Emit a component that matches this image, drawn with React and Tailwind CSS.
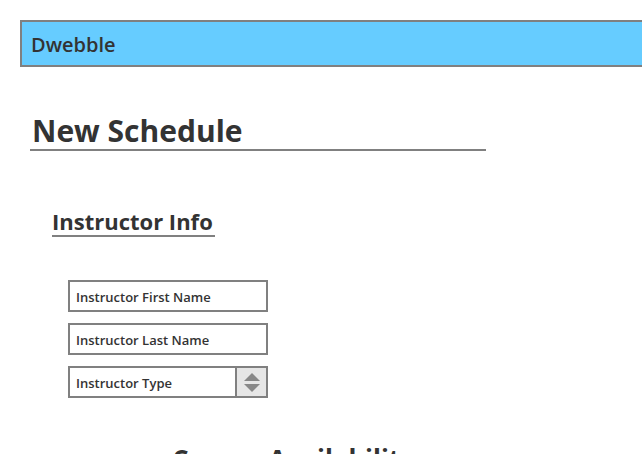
import React from "react";

function Field({ label, select }) {
  return (
    <div className="flex h-8 w-[200px] border-2 border-[#808080] bg-white">
      <div className="flex flex-1 items-end pb-[3px] pl-[6px] text-[13px] font-semibold text-[#333]">
        {label}
      </div>
      {select && (
        <div className="flex w-[31px] flex-col items-center justify-center gap-[3px] border-l-2 border-[#808080] bg-[#e6e6e6]">
          <svg width="16" height="8" viewBox="0 0 16 8">
            <polygon points="8,0 16,8 0,8" fill="#888" />
          </svg>
          <svg width="16" height="8" viewBox="0 0 16 8">
            <polygon points="0,0 16,0 8,8" fill="#888" />
          </svg>
        </div>
      )}
    </div>
  );
}

export default function App() {
  return (
    <div className="h-[454px] w-[642px] overflow-hidden bg-white font-['Open_Sans',sans-serif] text-[#333]">
      {/* header bar */}
      <div className="pl-5 pt-5">
        <div className="flex h-[47px] items-center border-2 border-r-0 border-[#808080] bg-[#66ccff] pl-[9px] pt-[2px] text-[20px] font-semibold">
          Dwebble
        </div>
      </div>

      {/* title */}
      <div className="ml-[30px] mt-[46px] w-[456px] border-b-2 border-[#808080] pl-[2px] text-[30px] font-bold leading-[36px]">
        New Schedule
      </div>

      {/* instructor */}
      <div className="ml-[52px] mt-[56px] inline-block border-b-2 border-[#808080] pr-[2px] text-[22px] font-bold leading-[28px]">
        Instructor Info
      </div>

      <div className="ml-[68px] mt-[43px] flex flex-col gap-[11px]">
        <Field label="Instructor First Name" />
        <Field label="Instructor Last Name" />
        <Field label="Instructor Type" select />
      </div>

      <div className="ml-[172px] mt-[44px] text-[26px] font-bold leading-[34px]">
        Course Availability
      </div>
    </div>
  );
}
